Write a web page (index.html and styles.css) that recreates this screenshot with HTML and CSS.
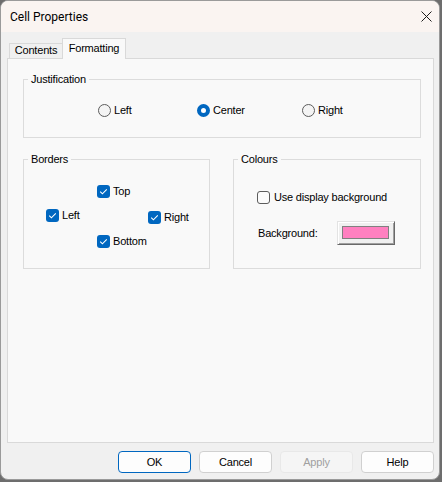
FILE: index.html
```html
<!DOCTYPE html>
<html>
<head>
<meta charset="utf-8">
<link rel="stylesheet" href="styles.css">
</head>
<body>
<div class="window">
  <div class="titlebar">
    <span class="title">Cell Properties</span>
    <svg class="close" width="11" height="11" viewBox="0 0 11 11"><path d="M0.5 0.5 L10.5 10.5 M10.5 0.5 L0.5 10.5" stroke="#1c1c1c" stroke-width="1" fill="none"/></svg>
  </div>
  <div class="client">
    <div class="tabs">
      <div class="tab">Contents</div>
      <div class="tab active">Formatting</div>
    </div>
    <div class="panel">
      <fieldset class="group just">
        <legend>Justification</legend>
        <div class="radios">
          <label class="opt"><span class="radio"></span><span>Left</span></label>
          <label class="opt"><span class="radio on"></span><span>Center</span></label>
          <label class="opt"><span class="radio"></span><span>Right</span></label>
        </div>
      </fieldset>
      <div class="row2">
        <fieldset class="group borders">
          <legend>Borders</legend>
          <div class="brow top">
            <label class="opt"><span class="check on"><svg width="13" height="13" viewBox="0 0 13 13"><path d="M3.2 6.6 L5.4 8.8 L9.8 4.3" stroke="#fff" stroke-width="1.1" fill="none"/></svg></span><span>Top</span></label>
          </div>
          <div class="brow mid">
            <label class="opt left"><span class="check on"><svg width="13" height="13" viewBox="0 0 13 13"><path d="M3.2 6.6 L5.4 8.8 L9.8 4.3" stroke="#fff" stroke-width="1.1" fill="none"/></svg></span><span>Left</span></label>
            <label class="opt right"><span class="check on"><svg width="13" height="13" viewBox="0 0 13 13"><path d="M3.2 6.6 L5.4 8.8 L9.8 4.3" stroke="#fff" stroke-width="1.1" fill="none"/></svg></span><span>Right</span></label>
          </div>
          <div class="brow bot">
            <label class="opt"><span class="check on"><svg width="13" height="13" viewBox="0 0 13 13"><path d="M3.2 6.6 L5.4 8.8 L9.8 4.3" stroke="#fff" stroke-width="1.1" fill="none"/></svg></span><span>Bottom</span></label>
          </div>
        </fieldset>
        <fieldset class="group colours">
          <legend>Colours</legend>
          <div class="crow">
            <label class="opt wide"><span class="check"></span><span>Use display background</span></label>
          </div>
          <div class="bgrow">
            <span class="bglabel">Background:</span>
            <span class="swatchbtn"><span class="swatch"></span></span>
          </div>
        </fieldset>
      </div>
    </div>
    <div class="buttons">
      <button class="btn default">OK</button>
      <button class="btn">Cancel</button>
      <button class="btn disabled">Apply</button>
      <button class="btn">Help</button>
    </div>
  </div>
</div>
</body>
</html>
```

FILE: styles.css
```css
html, body {
  margin: 0;
  padding: 0;
}
body {
  width: 442px;
  height: 482px;
  background: #6d6d6d;
  font-family: "Liberation Sans", Arial, sans-serif;
  font-size: 11px;
  letter-spacing: -0.2px;
  color: #000;
}
.window {
  width: 440px;
  height: 480px;
  box-sizing: border-box;
  border: 1px solid #9a9a9a;
  border-radius: 8px;
  overflow: hidden;
  background: #f0f0f0;
  display: flex;
  flex-direction: column;
}
.titlebar {
  height: 31px;
  flex: none;
  background: #faf4f1;
  display: flex;
  align-items: center;
  justify-content: space-between;
  padding: 0 7px 0 9px;
}
.title {
  font-family: Roboto, "Liberation Sans", sans-serif;
  font-size: 12px;
  letter-spacing: 0;
  color: #000;
  margin-top: 1px;
}
.close {
  display: block;
  margin-top: 0;
}
.client {
  flex: 1;
  display: flex;
  flex-direction: column;
}
.tabs {
  height: 26px;
  flex: none;
  display: flex;
  align-items: flex-end;
  padding-left: 8px;
}
.tab {
  box-sizing: border-box;
  height: 15px;
  width: 53px;
  border: 1px solid #d9d9d9;
  border-right: none;
  border-bottom: none;
  background: #f0f0f0;
  text-align: center;
  line-height: 13px;
}
.tab.active {
  position: relative;
  z-index: 1;
  height: 21px;
  width: 64px;
  border-right: 1px solid #d9d9d9;
  background: #f9f9f9;
  margin-bottom: -1px;
  line-height: 15px;
  padding-top: 2px;
}
.panel {
  height: 385px;
  box-sizing: border-box;
  margin: 0 5px 0 6px;
  border: 1px solid #d9d9d9;
  background: #f9f9f9;
  padding: 13px 12px 0 15px;
}
.group {
  margin: 0;
  padding: 0;
  border: 1px solid #dcdcdc;
  min-width: 0;
}
.group legend {
  margin-left: 4px;
  padding: 0 3px;
  line-height: 15px;
}
.opt {
  display: flex;
  align-items: center;
  gap: 3px;
  line-height: 13px;
  height: 13px;
  white-space: nowrap;
}
.radios {
  display: grid;
  grid-template-columns: 99px 105px auto;
  padding-left: 74px;
  margin-top: 17px;
  padding-bottom: 20px;
}
.radio {
  box-sizing: border-box;
  width: 13px;
  height: 13px;
  border-radius: 50%;
  border: 1px solid #5c5c5c;
  background: #f4f4f4;
  flex: none;
}
.radio.on {
  border: 4px solid #0067c0;
  background: #fff;
}
.check {
  box-sizing: border-box;
  width: 13px;
  height: 13px;
  border-radius: 3px;
  border: 1px solid #5c5c5c;
  background: #fbfbfb;
  flex: none;
  display: block;
}
.check.on {
  border: none;
  background: #0067c0;
}
.check svg {
  display: block;
}
.row2 {
  display: flex;
  gap: 23px;
  margin-top: 14px;
}
.borders {
  width: 187px;
  box-sizing: border-box;
  padding-bottom: 20px;
}
.colours {
  width: 188px;
  box-sizing: border-box;
  padding-bottom: 23px;
}
.brow {
  display: flex;
}
.brow.top {
  margin-top: 18px;
  padding-left: 73px;
}
.brow.mid {
  margin-top: 11px;
  padding-left: 22px;
  height: 15px;
}
.brow.mid .left {
  width: 102px;
}
.brow.mid .right {
  margin-top: 2px;
}
.brow.bot {
  margin-top: 11px;
  padding-left: 73px;
}
.crow {
  margin-top: 24px;
  padding-left: 23px;
}
.opt.wide {
  gap: 4px;
}
.bgrow {
  margin-top: 17px;
  padding-left: 24px;
  display: flex;
  align-items: center;
  height: 24px;
}
.bglabel {
  width: 79px;
  line-height: 13px;
}
.swatchbtn {
  box-sizing: border-box;
  width: 58px;
  height: 24px;
  background: #f0f0f0;
  border-top: 1px solid #e3e3e3;
  border-left: 1px solid #e3e3e3;
  border-right: 1px solid #696969;
  border-bottom: 1px solid #696969;
  box-shadow: inset 1px 1px 0 #ffffff, inset -1px -1px 0 #a0a0a0;
  padding: 4px 0 0 4px;
  display: block;
}
.swatch {
  display: block;
  box-sizing: border-box;
  width: 47px;
  height: 13px;
  background: #ff80c0;
  border: 1px solid #808080;
}
.buttons {
  display: flex;
  justify-content: flex-end;
  gap: 8px;
  margin-top: 8px;
  padding-right: 5px;
}
.btn {
  box-sizing: border-box;
  width: 73px;
  height: 22px;
  border: 1px solid #d0d0d0;
  border-radius: 4px;
  background: #fdfdfd;
  font-family: "Liberation Sans", Arial, sans-serif;
  font-size: 11px;
  letter-spacing: -0.2px;
  color: #000;
  padding: 0;
  line-height: 20px;
}
.btn.default {
  border-color: #0067c0;
}
.btn.disabled {
  background: #f5f5f5;
  border-color: #e8e8e8;
  color: #a0a0a0;
}
```
